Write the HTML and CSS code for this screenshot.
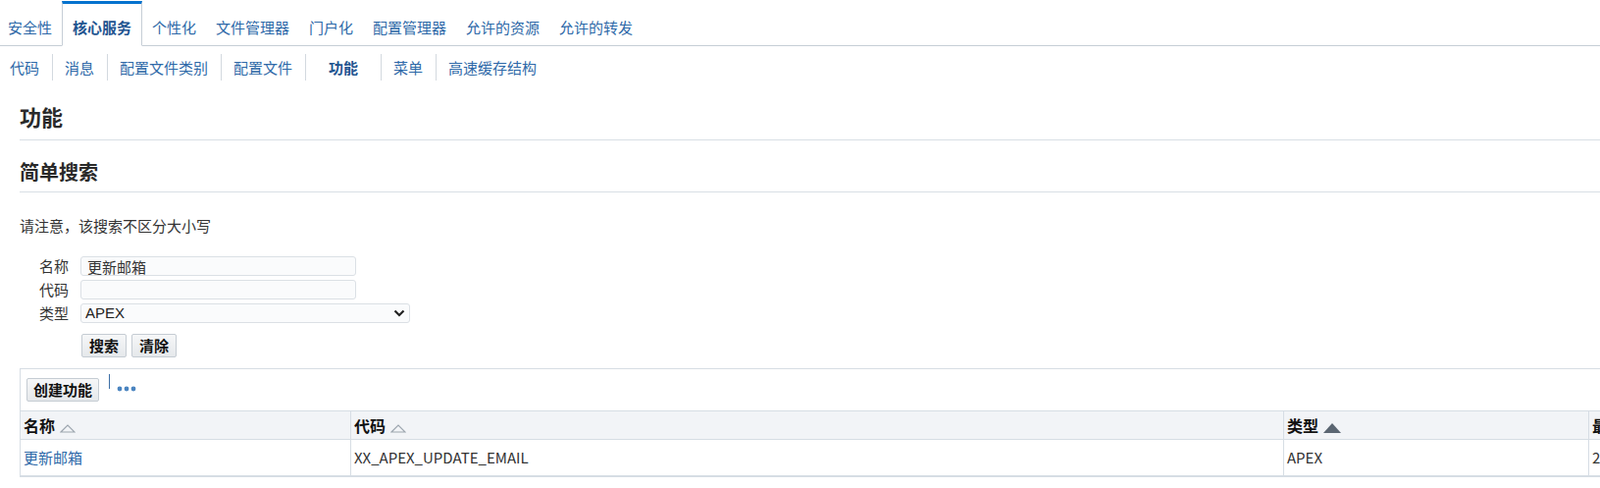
FILE: index.html
```html
<!DOCTYPE html>
<html lang="zh-CN">
<head>
  <meta charset="UTF-8">
  <meta name="viewport" content="width=device-width, initial-scale=1.0">
  <title>功能</title>
  <link rel="stylesheet" href="styles.css">
</head>
<body>
  <div class="tabs">
    <a class="tab first" href="#">安全性</a>
    <a class="tab active" href="#">核心服务</a>
    <a class="tab" href="#">个性化</a>
    <a class="tab" href="#">文件管理器</a>
    <a class="tab" href="#">门户化</a>
    <a class="tab" href="#">配置管理器</a>
    <a class="tab" href="#">允许的资源</a>
    <a class="tab" href="#">允许的转发</a>
  </div>

  <div class="subnav">
    <a class="sub first" href="#">代码</a>
    <a class="sub" href="#">消息</a>
    <a class="sub" href="#">配置文件类别</a>
    <a class="sub" href="#">配置文件</a>
    <span class="sub current">功能</span>
    <a class="sub" href="#">菜单</a>
    <a class="sub last" href="#">高速缓存结构</a>
  </div>

  <div class="content">
    <h1 class="page-title">功能</h1>
    <h2 class="section-title">简单搜索</h2>
    <p class="note">请注意，该搜索不区分大小写</p>

    <div class="search-form">
      <label class="field-label">名称</label>
      <input class="field-input" type="text" value="更新邮箱">
      <label class="field-label">代码</label>
      <input class="field-input" type="text" value="">
      <label class="field-label">类型</label>
      <div class="select-wrap">
        <select class="field-select">
          <option>APEX</option>
        </select>
        <svg class="chevron" width="12" height="8" viewBox="0 0 12 8">
          <path d="M1.5 1.5 L6 6 L10.5 1.5" fill="none" stroke="#222" stroke-width="2.2"/>
        </svg>
      </div>
    </div>

    <div class="form-actions">
      <button class="btn">搜索</button>
      <button class="btn">清除</button>
    </div>

    <div class="results">
      <div class="toolbar">
        <button class="btn btn-create">创建功能</button>
        <span class="tool-sep"></span>
        <svg class="more" width="20" height="6" viewBox="0 0 20 6">
          <circle cx="3" cy="3" r="2.4" fill="#4a84c0"/>
          <circle cx="10" cy="3" r="2.4" fill="#4a84c0"/>
          <circle cx="17" cy="3" r="2.4" fill="#4a84c0"/>
        </svg>
      </div>
      <table class="grid">
        <colgroup>
          <col class="col-name">
          <col class="col-code">
          <col class="col-type">
          <col class="col-date">
        </colgroup>
        <thead>
          <tr>
            <th>名称 <svg class="sort" width="16" height="9" viewBox="0 0 16 9"><path d="M1 8 L8 1 L15 8 Z" fill="none" stroke="#9ca5ae" stroke-width="1.2"/></svg></th>
            <th>代码 <svg class="sort" width="16" height="9" viewBox="0 0 16 9"><path d="M1 8 L8 1 L15 8 Z" fill="none" stroke="#9ca5ae" stroke-width="1.2"/></svg></th>
            <th>类型 <svg class="sort" width="18" height="10" viewBox="0 0 18 10"><path d="M0 10 L9 0 L18 10 Z" fill="#5b6672"/></svg></th>
            <th>最后更新日期</th>
          </tr>
        </thead>
        <tbody>
          <tr>
            <td><a class="row-link" href="#">更新邮箱</a></td>
            <td>XX_APEX_UPDATE_EMAIL</td>
            <td>APEX</td>
            <td>2024-5-21</td>
          </tr>
        </tbody>
      </table>
    </div>
  </div>
</body>
</html>
```

FILE: styles.css
```css
/* page basics */
* {
  margin: 0;
  padding: 0;
  box-sizing: border-box;
}
html, body {
  overflow: hidden;
}
body {
  font-family: "Noto Sans CJK SC", "Liberation Sans", sans-serif;
  font-size: 15px;
  color: #333;
  background: #fff;
  width: 1631px;
}
a {
  text-decoration: none;
}

/* top tabs */
.tabs {
  display: flex;
  padding-top: 1px;
  border-bottom: 1px solid #c6ced6;
}
.tab {
  padding: 14px 10px 8px;
  line-height: 20px;
  border-top: 3px solid transparent;
  color: #2e69a8;
}
.tab.first {
  padding-left: 8px;
}
.tab.active {
  border: 1px solid #c6ced6;
  border-top: 3px solid #0572ce;
  border-bottom: 1px solid #fff;
  margin-bottom: -1px;
  font-weight: bold;
  color: #1f5490;
}

/* second level nav */
.subnav {
  display: flex;
  padding-top: 8px;
}
.sub {
  line-height: 27px;
  padding: 0 13px 0 12px;
  border-right: 1px solid #d3d9df;
  color: #2e69a8;
}
.sub.first {
  padding-left: 10px;
}
.sub.last {
  border-right: none;
}
.sub.current {
  padding: 0 23px;
  font-weight: bold;
  color: #1f5490;
}

/* main area */
.content {
  padding-left: 20px;
}
.page-title {
  margin-top: 21px;
  font-size: 22px;
  line-height: 30px;
  padding-bottom: 9px;
  color: #2a2a2a;
  border-bottom: 1px solid #d9dfe5;
}
.section-title {
  margin-top: 18px;
  font-size: 20px;
  line-height: 28px;
  padding-bottom: 6px;
  color: #2a2a2a;
  border-bottom: 1px solid #d9dfe5;
}
.note {
  margin-top: 24px;
  line-height: 20px;
}

/* search form */
.search-form {
  margin-top: 21px;
  display: grid;
  grid-template-columns: 50px auto;
  column-gap: 12px;
  row-gap: 4px;
  justify-items: start;
}
.field-label {
  justify-self: end;
  line-height: 20px;
}
.field-input {
  display: block;
  width: 281px;
  height: 20px;
  border: 1px solid #dbe0e5;
  border-radius: 3px;
  background: #fafbfc;
  font-family: inherit;
  font-size: 15px;
  color: #333;
  padding: 0 6px;
  outline: none;
}
.select-wrap {
  position: relative;
  height: 20px;
}
.field-select {
  display: block;
  appearance: none;
  -webkit-appearance: none;
  width: 336px;
  height: 20px;
  border: 1px solid #dbe0e5;
  border-radius: 3px;
  background: #fafbfc;
  font-family: "Liberation Sans", sans-serif;
  font-size: 15px;
  color: #222;
  padding: 0 4px;
  line-height: 18px;
}
.chevron {
  position: absolute;
  right: 5px;
  top: 6px;
}

.form-actions {
  margin-top: 11px;
  padding-left: 63px;
  display: flex;
  gap: 5px;
}
.btn {
  height: 24px;
  padding: 0 7px;
  font-family: inherit;
  font-size: 15px;
  font-weight: bold;
  line-height: 22px;
  color: #111;
  background: linear-gradient(#f6f7f8, #e5e8eb);
  border: 1px solid #c5ccd3;
  border-radius: 2px;
}

/* results */
.results {
  margin-top: 11px;
  border-top: 1px solid #d6dde4;
  border-left: 1px solid #d6dde4;
}
.toolbar {
  display: flex;
  align-items: flex-start;
  padding: 9px 6px;
  height: 42px;
}
.btn-create {
  padding: 0 6px;
}
.tool-sep {
  width: 1px;
  height: 15px;
  margin-top: -4px;
  margin-left: 10px;
  background: #3d6fa6;
}
.more {
  margin-top: 8px;
  margin-left: 7px;
}

.grid {
  border-collapse: separate;
  border-spacing: 0;
  table-layout: fixed;
  width: 1798px;
}
.col-name { width: 336px; }
.col-code { width: 951px; }
.col-type { width: 311px; }
.col-date { width: 200px; }
.grid th {
  text-align: left;
  font-size: 16px;
  font-weight: bold;
  color: #111;
  background: #f2f4f7;
  line-height: 28px;
  padding: 0 3px;
  border-top: 1px solid #d6dde4;
  border-bottom: 1px solid #d6dde4;
  white-space: nowrap;
}
.grid td {
  line-height: 36px;
  padding: 0 3px;
  border-bottom: 2px solid #d6dde4;
  color: #333;
  white-space: nowrap;
}
.grid th + th,
.grid td + td {
  border-left: 1px solid #d6dde4;
}
.sort {
  vertical-align: -1px;
  margin-left: 1px;
}
.row-link {
  color: #2e69a8;
}
```
